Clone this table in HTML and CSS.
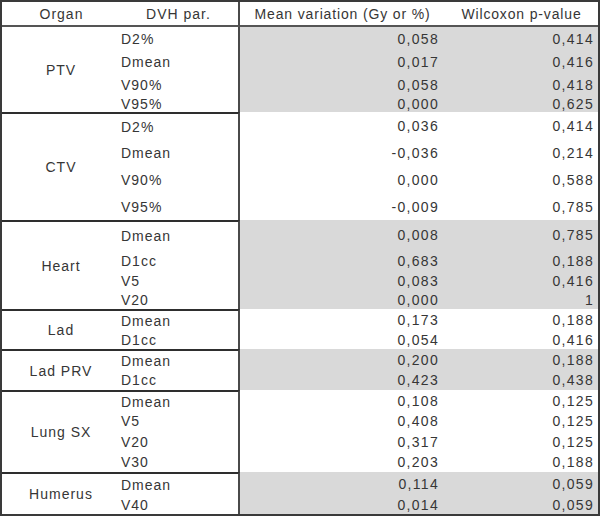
FILE: index.html
```html
<!DOCTYPE html>
<html>
<head>
<meta charset="utf-8">
<link rel="stylesheet" href="styles.css">
</head>
<body>
<div class="table">
  <div class="hd organ">Organ</div>
  <div class="hd param">DVH par.</div>
  <div class="hd mean">Mean variation (Gy or %)</div>
  <div class="hd pv">Wilcoxon p-value</div>

  <div class="organ span4">PTV</div>
  <div class="param">D2%</div><div class="mean g">0,058</div><div class="pv g">0,414</div>
  <div class="param">Dmean</div><div class="mean g">0,017</div><div class="pv g">0,416</div>
  <div class="param">V90%</div><div class="mean g">0,058</div><div class="pv g">0,418</div>
  <div class="param">V95%</div><div class="mean g">0,000</div><div class="pv g">0,625</div>

  <div class="organ span4 top">CTV</div>
  <div class="param top">D2%</div><div class="mean">0,036</div><div class="pv">0,414</div>
  <div class="param">Dmean</div><div class="mean">-0,036</div><div class="pv">0,214</div>
  <div class="param">V90%</div><div class="mean">0,000</div><div class="pv">0,588</div>
  <div class="param">V95%</div><div class="mean">-0,009</div><div class="pv">0,785</div>

  <div class="organ span4 top">Heart</div>
  <div class="param top">Dmean</div><div class="mean g">0,008</div><div class="pv g">0,785</div>
  <div class="param">D1cc</div><div class="mean g">0,683</div><div class="pv g">0,188</div>
  <div class="param">V5</div><div class="mean g">0,083</div><div class="pv g">0,416</div>
  <div class="param">V20</div><div class="mean g">0,000</div><div class="pv g">1</div>

  <div class="organ span2 top">Lad</div>
  <div class="param top">Dmean</div><div class="mean">0,173</div><div class="pv">0,188</div>
  <div class="param">D1cc</div><div class="mean">0,054</div><div class="pv">0,416</div>

  <div class="organ span2 top">Lad PRV</div>
  <div class="param top">Dmean</div><div class="mean g">0,200</div><div class="pv g">0,188</div>
  <div class="param">D1cc</div><div class="mean g">0,423</div><div class="pv g">0,438</div>

  <div class="organ span4 top">Lung SX</div>
  <div class="param top">Dmean</div><div class="mean">0,108</div><div class="pv">0,125</div>
  <div class="param">V5</div><div class="mean">0,408</div><div class="pv">0,125</div>
  <div class="param">V20</div><div class="mean">0,317</div><div class="pv">0,125</div>
  <div class="param">V30</div><div class="mean">0,203</div><div class="pv">0,188</div>

  <div class="organ span2 top">Humerus</div>
  <div class="param top">Dmean</div><div class="mean g">0,114</div><div class="pv g">0,059</div>
  <div class="param">V40</div><div class="mean g">0,014</div><div class="pv g">0,059</div>
</div>
</body>
</html>
```

FILE: styles.css
```css
html, body {
  margin: 0;
  padding: 0;
  background: #ffffff;
}

.table {
  box-sizing: border-box;
  width: 600px;
  height: 516px;
  border: 2px solid #3a3a3a;
  display: grid;
  grid-template-columns: 117px 121px 205px 1fr;
  grid-template-rows:
    25px
    23px 23px 23px 16px
    27px 27px 27px 27px
    30px 21px 20px 18px
    21px 19px
    21px 20px
    21px 20px 21px 20px
    23px 19px;
  font-family: "Liberation Sans", Arial, sans-serif;
  font-size: 14px;
  line-height: 16px;
  letter-spacing: 1px;
  color: #363636;
}

.table > div {
  box-sizing: border-box;
  display: flex;
  align-items: center;
  white-space: nowrap;
  min-height: 0;
}

.organ {
  grid-column: 1;
  justify-content: center;
  padding-left: 1px;
}

.param {
  grid-column: 2;
  justify-content: flex-start;
  padding-left: 2px;
  border-right: 2px solid #4a4a4a;
}

.mean {
  grid-column: 3;
  justify-content: flex-end;
  padding-right: 6px;
  letter-spacing: 1.3px;
}

.pv {
  grid-column: 4;
  justify-content: flex-end;
  padding-right: 4px;
  letter-spacing: 1.3px;
}

.span4 { grid-row: span 4; }
.span2 { grid-row: span 2; }

.top {
  border-top: 2px solid #2e2e2e;
}

.g {
  background: #d9d9d9;
}

.hd {
  border-bottom: 2px solid #555555;
  padding-top: 1px;
}

.hd.param {
  justify-content: center;
  padding-left: 0;
}

.hd.mean,
.hd.pv {
  justify-content: center;
  padding-right: 0;
  letter-spacing: 0.85px;
}

.hd.organ {
  padding-left: 2px;
}
```
